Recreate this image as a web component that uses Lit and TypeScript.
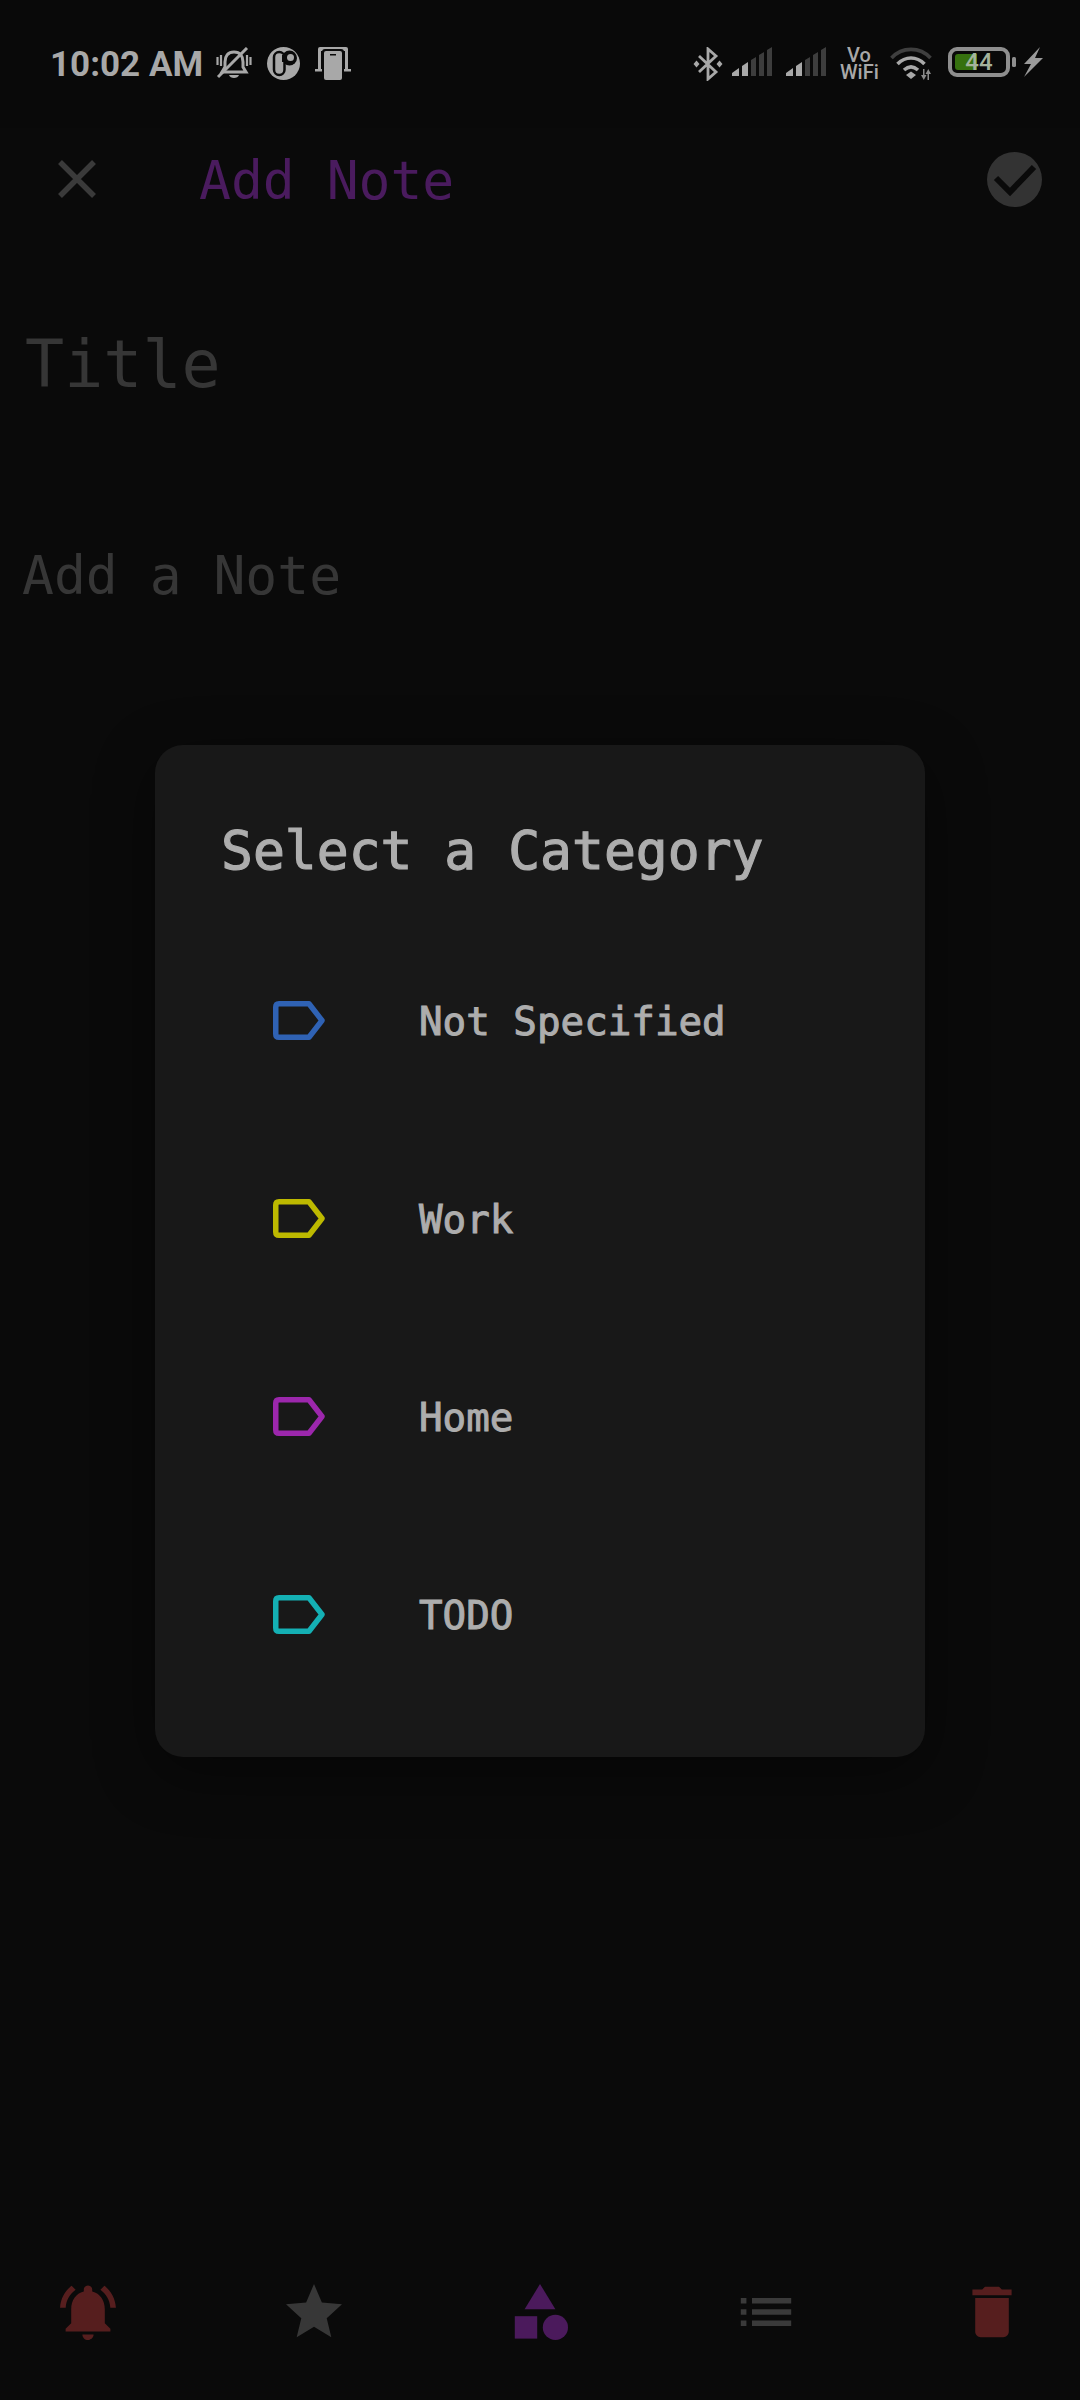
import { LitElement, html, css, svg } from 'lit';
import { customElement } from 'lit/decorators.js';

const CATEGORIES = [
  { name: 'Not Specified', color: '#2f62b4' },
  { name: 'Work', color: '#bdb900' },
  { name: 'Home', color: '#9c27ac' },
  { name: 'TODO', color: '#14b0b4' },
];

const bottomIcons = [
  {
    color: '#561e1e',
    shape: svg`<path d="M7.58 4.08L6.15 2.65C3.75 4.48 2.17 7.3 2.03 10.5h2c.15-2.65 1.51-4.97 3.55-6.42zm12.39 6.42h2c-.15-3.2-1.73-6.02-4.12-7.85l-1.42 1.43c2.02 1.45 3.39 3.77 3.54 6.42zM18 11c0-3.07-1.64-5.64-4.5-6.32V4c0-.83-.67-1.5-1.5-1.5s-1.5.67-1.5 1.5v.68C7.63 5.36 6 7.92 6 11v5l-2 2v1h16v-1l-2-2v-5zm-6 11c.14 0 .27-.01.4-.04.65-.14 1.18-.58 1.44-1.18.1-.24.15-.5.15-.78h-4c.01 1.1.9 2 2.01 2z"/>`,
  },
  {
    color: '#373737',
    shape: svg`<path d="M12 17.27L18.18 21l-1.64-6.81L22 9.24l-7.19-.61L12 2 9.19 8.63 2 9.24l5.46 4.95L5.82 21z"/>`,
  },
  {
    color: '#4b1a5c',
    shape: svg`<path d="M12 2l-5.5 9h11z"/><circle cx="17.5" cy="17.5" r="4.5"/><path d="M3 13.5h8v8H3z"/>`,
  },
  {
    color: '#3a3a3a',
    shape: svg`<path d="M3 13h2v-2H3v2zm0 4h2v-2H3v2zm0-8h2V7H3v2zm4 4h14v-2H7v2zm0 4h14v-2H7v2zM7 7v2h14V7H7z"/>`,
  },
  {
    color: '#561e1e',
    shape: svg`<path d="M6 19c0 1.1.9 2 2 2h8c1.1 0 2-.9 2-2V7H6v12zM19 4h-3.5l-1-1h-5l-1 1H5v2h14V4z"/>`,
  },
];

// one signal strength glyph, first two bars lit
const signal = html`<svg width="40" height="29" viewBox="0 0 40 29">
  <path d="M0 29V26L7 21V29Z M10 29V19L16 15V29Z" fill="#a8a8a8" />
  <path d="M19 29V13L24 10V29Z M27 29V8L32 5V29Z M35 29V3L40 0V29Z" fill="#3d3d3d" />
</svg>`;

@customElement('app-root')
export class AppRoot extends LitElement {
  static styles = css`
    :host {
      display: block;
      font-family: 'DejaVu Sans Mono', 'Liberation Mono', monospace;
    }

    .page {
      position: relative;
      height: 2400px;
      display: flex;
      flex-direction: column;
      background: #0a0a0a;
      overflow: hidden;
    }

    .status {
      height: 128px;
      box-sizing: border-box;
      padding: 47px 37px 0 50px;
      display: flex;
      align-items: flex-start;
      color: #a8a8a8;
      background: #090909;
    }

    .time {
      font: 700 35px/36px Roboto, sans-serif;
      width: 150px;
      margin-right: 16px;
      white-space: nowrap;
    }

    .status svg {
      display: block;
      flex: none;
    }

    .status-left {
      display: flex;
      gap: 15px;
    }

    .status-right {
      margin-left: auto;
      display: flex;
      align-items: flex-start;
    }

    .vowifi {
      font: 500 20px/17px Roboto, sans-serif;
      text-align: center;
      color: #a8a8a8;
      width: 38px;
      margin: 0 12px 0 14px;
    }

    .battery {
      width: 62px;
      height: 30px;
      box-sizing: border-box;
      border: 4px solid #8e8e8e;
      border-radius: 9px;
      padding: 3px;
      position: relative;
      margin-left: 16px;
      flex: none;
    }

    .battery-fill {
      height: 100%;
      width: 46%;
      background: #36710f;
      border-radius: 3px 0 0 3px;
    }

    .battery-level {
      position: absolute;
      inset: 0;
      text-align: center;
      font: 500 24px/22px Roboto, sans-serif;
      color: #a4b39c;
    }

    .toolbar {
      height: 102px;
      display: flex;
      align-items: center;
      padding: 0 38px 0 58px;
    }

    .toolbar h1 {
      margin: 3px 0 0 103px;
      font-size: 53px;
      font-weight: 400;
      line-height: 70px;
      color: #4a1b5e;
    }

    .toolbar .done {
      margin-left: auto;
    }

    .field-title {
      margin: 97px 0 0 25px;
      font-size: 65px;
      line-height: 76px;
      color: #363636;
    }

    .field-note {
      margin: 142px 0 0 22px;
      font-size: 53px;
      line-height: 62px;
      color: #363636;
    }

    .bottom-bar {
      margin-top: auto;
      padding: 0 60px 60px;
      display: flex;
      justify-content: space-between;
    }

    .bottom-bar svg {
      display: block;
      width: 56px;
      height: 56px;
    }

    .scrim {
      position: absolute;
      inset: 102px 0 0;
      display: flex;
      align-items: center;
      justify-content: center;
    }

    .dialog {
      width: 770px;
      box-sizing: border-box;
      padding: 68px 0 44px;
      background: #181818;
      border-radius: 28px;
      box-shadow: 0 16px 60px rgba(0, 0, 0, 0.45);
    }

    .dialog h2 {
      margin: 0 0 32px 66px;
      font-size: 53px;
      font-weight: 500;
      line-height: 76px;
      color: #adadad;
      -webkit-text-stroke: 1.2px #adadad;
    }

    .row {
      height: 198px;
      display: flex;
      align-items: center;
      padding-left: 118px;
      gap: 94px;
      font-size: 39.2px;
      color: #adadad;
      -webkit-text-stroke: 1px #adadad;
    }

    .row span {
      position: relative;
      top: 1px;
    }

    .row svg {
      display: block;
      flex: none;
    }
  `;

  render() {
    return html`
      <div class="page">
        <div class="status">
          <span class="time">10:02 AM</span>
          <div class="status-left">
            <svg width="36" height="33" viewBox="0 0 36 33" fill="none" stroke="#a8a8a8">
              <path d="M18 5c-6 0-9 4-9 10v5l-3 5h24l-3-5v-5c0-6-3-10-9-10z" stroke-width="3" />
              <path d="M31 1 2 30" stroke-width="3" />
              <path d="M1.500 10v8M5 8v11M34.500 10v8M31 8v11" stroke-width="2.200" />
              <path d="M13 28c1 4 9 4 10 0z" fill="#a8a8a8" stroke="none" />
            </svg>
            <svg width="33" height="33" viewBox="0 0 33 33">
              <circle cx="16.500" cy="16.500" r="16.500" fill="#a8a8a8" />
              <circle cx="22.500" cy="11" r="7.500" fill="#0a0a0a" />
              <rect x="7" y="5" width="10.500" height="23" rx="5.200" fill="#a8a8a8" stroke="#0a0a0a" stroke-width="2.500" />
              <rect x="15" y="8" width="6" height="7" fill="#0a0a0a" />
              <circle cx="23.500" cy="10.500" r="3.500" fill="#a8a8a8" />
            </svg>
            <svg width="36" height="33" viewBox="0 0 36 33">
              <path d="M3 22V2q0-2 2-2h26q2 0 2 2v20h-3V4H6v18z" fill="#a8a8a8" />
              <path d="M0 22h8v2.500H0zM28 22h8v2.500h-8z" fill="#a8a8a8" />
              <rect x="7" y="2" width="22" height="31" rx="3" fill="#0a0a0a" />
              <rect x="9" y="4" width="18" height="29" rx="2" fill="#a8a8a8" />
              <rect x="15" y="7" width="6" height="1.500" fill="#0a0a0a" />
            </svg>
          </div>
          <div class="status-right">
            <svg width="30" height="34" viewBox="0 0 30 34" fill="none" stroke="#a8a8a8" stroke-width="2.800">
              <path d="M6 9l17 16-8 7V2l8 7L6 25" />
              <path d="M3.500 13.500l3 3.500-3 3.500-3-3.500zM26.500 13.500l3 3.500-3 3.500-3-3.500z" fill="#a8a8a8" stroke="none" />
            </svg>
            <span style="width:9px"></span>
            ${signal}
            <span style="width:14px"></span>
            ${signal}
            <span class="vowifi">Vo<br />WiFi</span>
            <svg width="42" height="33" viewBox="0 0 42 33" fill="none" stroke-width="3.600">
              <path d="M1.500 11C12-.5 30-.5 40.500 11" stroke="#3f3f3f" />
              <path d="M7.500 17c8-8 19-8 27 0M14 23c4.500-4 9.500-4 14 0" stroke="#a8a8a8" />
              <path d="M16 28l5-3.500 5 3.500-5 4z" fill="#a8a8a8" stroke="none" />
              <path d="M33 22h1.500v6h2l-2.700 5-2.800-5h2zM37.500 33h1.500v-6h2l-2.700-5-2.800 5h2z" fill="#8a8a8a" stroke="none" />
            </svg>
            <div class="battery">
              <div class="battery-fill"></div>
              <div class="battery-level">44</div>
            </div>
            <svg width="33" height="30" viewBox="0 0 33 30">
              <rect x="2" y="10" width="4" height="10" rx="1.500" fill="#8e8e8e" />
              <path d="M30 0 14 17h7l-7 13 19-19h-8z" fill="#9a9a9a" />
            </svg>
          </div>
        </div>

        <div class="toolbar">
          <svg width="38" height="38" viewBox="0 0 38 38" stroke="#3a3a3a" stroke-width="5.500">
            <path d="M2 2l34 34M36 2 2 36" />
          </svg>
          <h1>Add Note</h1>
          <svg class="done" width="55" height="55" viewBox="0 0 55 55" fill="none">
            <circle cx="27.500" cy="27.500" r="27.500" fill="#333" />
            <path d="M9 26l14 14 24-25" stroke="#0a0a0a" stroke-width="6" />
          </svg>
        </div>

        <div class="field-title">Title</div>
        <div class="field-note">Add a Note</div>

        <div class="bottom-bar">
          ${bottomIcons.map(
            (icon) => html`<svg viewBox="2 2 20 20" fill=${icon.color}>${icon.shape}</svg>`
          )}
        </div>

        <div class="scrim">
          <div class="dialog">
            <h2>Select a Category</h2>
            ${CATEGORIES.map(
              (cat) => html`
                <div class="row">
                  <svg width="52" height="39" viewBox="0 0 52 39" fill="none" stroke=${cat.color} stroke-width="5.500" stroke-linejoin="round">
                    <path d="M6 2.750H36L49 19.500 36 36.250H6Q2.750 36.250 2.750 33V6Q2.750 2.750 6 2.750Z" />
                  </svg>
                  <span>${cat.name}</span>
                </div>
              `
            )}
          </div>
        </div>
      </div>
    `;
  }
}
